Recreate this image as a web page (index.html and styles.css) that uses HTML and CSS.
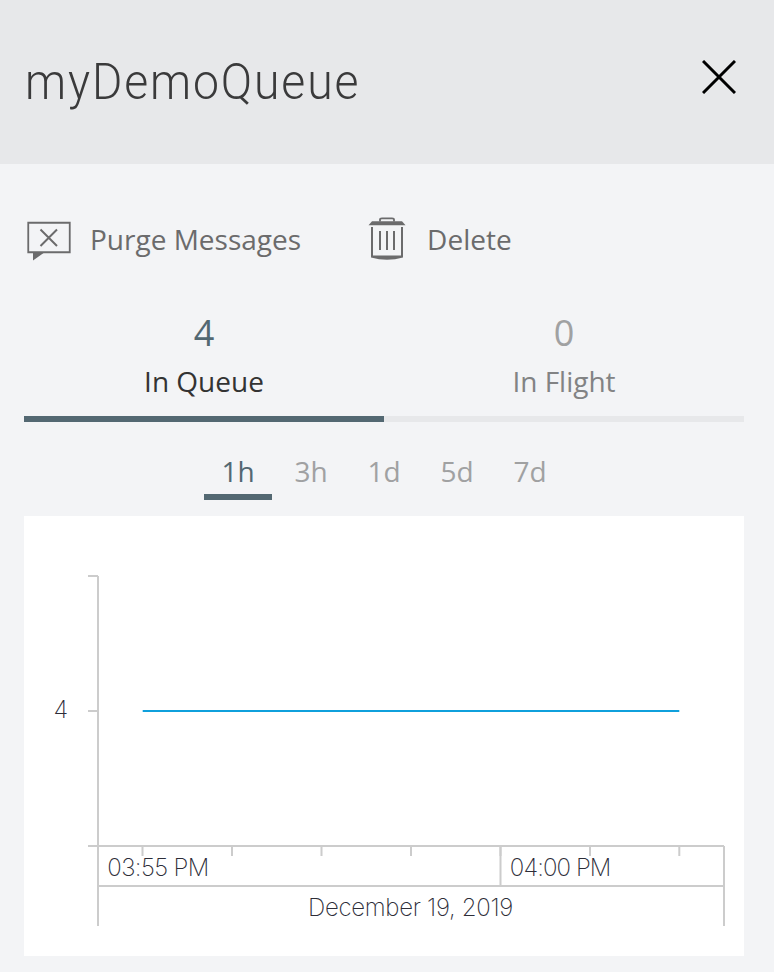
FILE: index.html
```html
<!DOCTYPE html>
<html lang="en">
<head>
<meta charset="utf-8">
<title>myDemoQueue</title>
<link rel="stylesheet" href="styles.css">
</head>
<body>
<header class="header">
  <h1 class="title">myDemoQueue</h1>
  <button class="close" aria-label="Close">
    <svg width="34" height="34" viewBox="0 0 34 34"><path d="M1 1L33 33M33 1L1 33" fill="none" stroke="#000" stroke-width="3"/></svg>
  </button>
</header>
<main class="content">
  <div class="actions">
    <button class="action purge">
      <svg width="44" height="40" viewBox="0 0 44 40"><path d="M1.25 1.75H42.75V31.25H1.25Z" fill="none" stroke="#6b6b6c" stroke-width="1.8"/><path d="M6 31H18L6 39.5Z" fill="#6b6b6c"/><path d="M13.5 8.5L30 25M30 8.5L13.5 25" fill="none" stroke="#6b6b6c" stroke-width="2"/></svg>
      <span>Purge Messages</span>
    </button>
    <button class="action delete">
      <svg width="38" height="44" viewBox="0 0 38 44"><path d="M0.5 8.2L4 4.2H34L37.5 8.2Z" fill="#6b6b6c"/><path d="M12 4.5V2.5Q12 1.3 14 1.3H24Q26 1.3 26 2.5V4.5" fill="none" stroke="#6b6b6c" stroke-width="1.8"/><path d="M4 10V40M34 10V40M12 14V33M19 14V33M26 14V33" fill="none" stroke="#6b6b6c" stroke-width="2"/><path d="M3 38.5H35V40.5Q27 42.8 19 42.8Q11 42.8 3 40.5Z" fill="#6b6b6c"/></svg>
      <span>Delete</span>
    </button>
  </div>
  <nav class="tabs">
    <div class="tab active"><span class="count">4</span><span class="label">In Queue</span></div>
    <div class="tab"><span class="count">0</span><span class="label">In Flight</span></div>
  </nav>
  <nav class="ranges">
    <span class="range active">1h</span>
    <span class="range">3h</span>
    <span class="range">1d</span>
    <span class="range">5d</span>
    <span class="range">7d</span>
  </nav>
  <section class="chart">
    <svg width="720" height="440" viewBox="0 0 720 440">
      <path class="axis" d="M64 60H74M74 60V410M64 195H74M64 330H700M74 370H700M700 330V410M476.5 330V370"/>
      <path class="axis" d="M118.5 331V340M208 331V340M297.5 331V340M387 331V340M476.5 331V340M566 331V340M655.3 331V340"/>
      <path class="series" d="M118.7 195H655.3"/>
      <text class="tick" x="29.5" y="202">4</text>
      <text class="tick start" x="83.3" y="360">03:55 PM</text>
      <text class="tick end" x="485.8" y="360">04:00 PM</text>
      <text class="tick date" x="284" y="400">December 19, 2019</text>
    </svg>
  </section>
</main>
</body>
</html>
```
FILE: styles.css
```css
* { box-sizing: border-box; }
body {
  margin: 0;
  min-height: 972px;
  background: #f3f4f6;
  font-family: "Open Sans", sans-serif;
  font-size: 28px;
  line-height: 40px;
  color: #333;
}
button { border: 0; padding: 0; background: none; font: inherit; color: inherit; }
svg { display: block; }
.header {
  display: flex;
  justify-content: space-between;
  align-items: center;
  height: 164px;
  padding: 0 38px 10px 24px;
  background: #e7e8ea;
}
.title {
  margin: 9px 0 0;
  font-family: Roboto, sans-serif;
  font-size: 50px;
  font-weight: 300;
  line-height: 60px;
  letter-spacing: 2px;
  color: #3a3a3b;
  transform: scaleX(0.927);
  transform-origin: -10px 50%;
  padding-left: 2px;
}
.content { padding: 0 30px 0 24px; }
.actions {
  display: flex;
  gap: 67px;
  height: 135px;
  padding-top: 53px;
  color: #6b6b6c;
}
.action { display: flex; align-items: center; height: 44px; }
.purge { gap: 19px; padding-left: 3px; }
.purge svg { margin-top: 3px; }
.delete { gap: 21px; }
.tabs { display: flex; height: 123px; }
.tab {
  display: flex;
  flex-direction: column;
  flex: 1;
  align-items: center;
  padding-top: 9px;
  border-bottom: 6px solid #e7e8ea;
  color: #828384;
}
.tab.active { border-color: #536872; color: #333; }
.count { font-size: 36px; line-height: 50px; color: #a0a1a2; }
.active .count { color: #536872; }
.label { margin-top: 3px; }
.ranges {
  display: flex;
  gap: 5px;
  height: 94px;
  padding: 29px 0 16px 180px;
}
.range {
  width: 68px;
  border-bottom: 6px solid transparent;
  text-align: center;
  color: #a0a1a2;
}
.range.active { border-color: #536872; color: #536872; }
.chart { height: 440px; background: #fff; }
.axis { fill: none; stroke: #ccc; stroke-width: 2; }
.series { fill: none; stroke: #0fa0dc; stroke-width: 2; }
.tick { font: 200 24px Inter, sans-serif; fill: #2d2d38; }
.start { letter-spacing: -0.6px; }
.end { letter-spacing: -0.9px; }
.date { letter-spacing: -0.3px; }
```
